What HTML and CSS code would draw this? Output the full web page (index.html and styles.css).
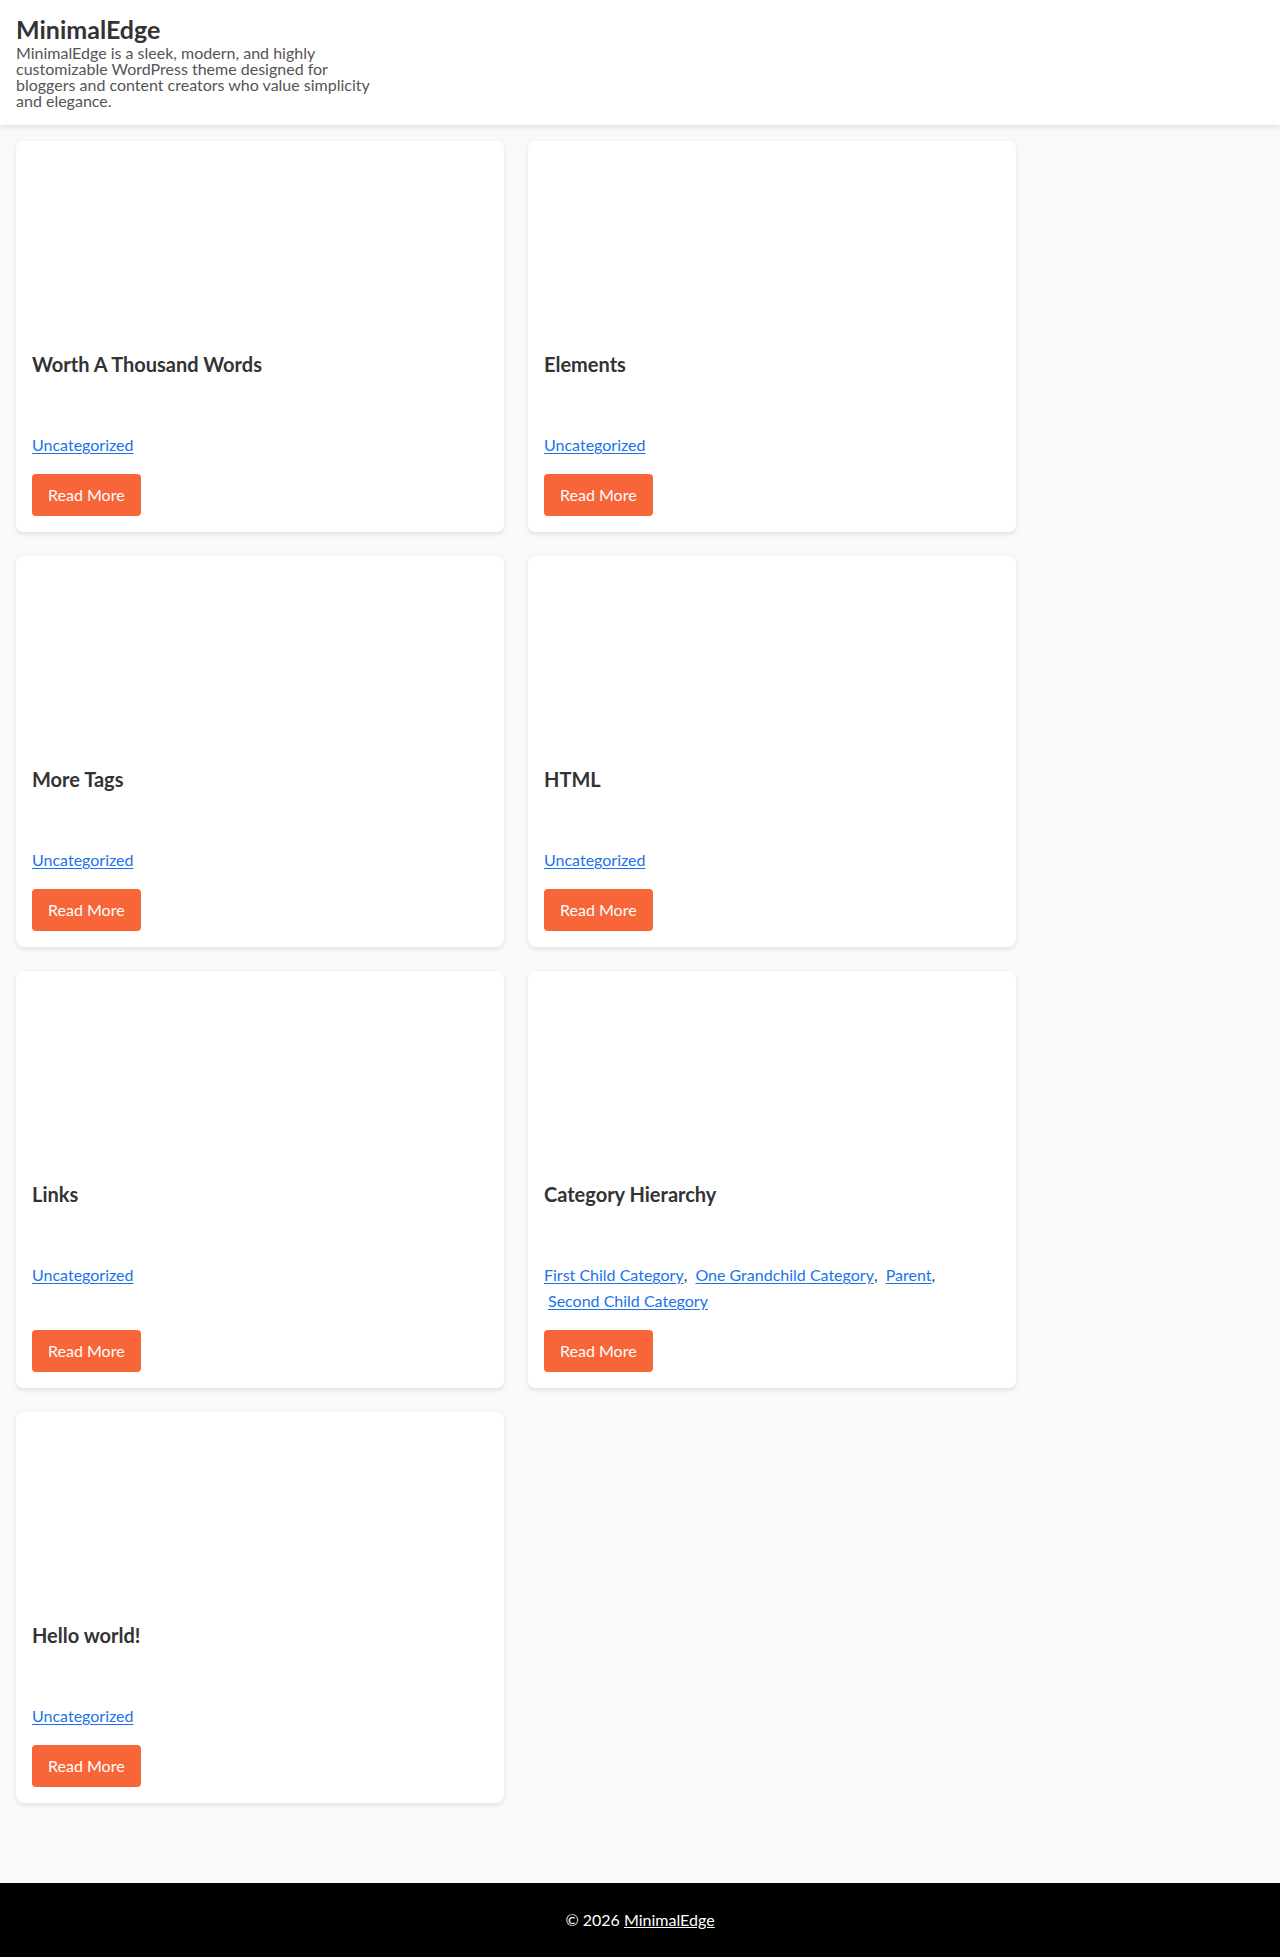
FILE: index.html
```html
<!DOCTYPE html>
<html lang="en">
<head>
    <meta charset="UTF-8">
    <meta name="viewport" content="width=device-width, initial-scale=1.0">
    <title>MinimalEdge</title>
    <link rel="stylesheet" href="styles.css">
</head>
<body>
    <header class="site-header">
        <div class="site-branding">
            <h1 class="site-title">MinimalEdge</h1>
            <p class="site-description">MinimalEdge is a sleek, modern, and highly customizable WordPress theme designed for bloggers and content creators who value simplicity and elegance.</p>
        </div>
    </header>

    <main class="site-main">
        <div class="posts-grid">
            <article class="post-card">
                <div class="post-thumb"></div>
                <h2 class="post-title">Worth A Thousand Words</h2>
                <div class="post-cats"><a href="#">Uncategorized</a></div>
                <a href="#" class="read-more">Read More</a>
            </article>
            <article class="post-card">
                <div class="post-thumb"></div>
                <h2 class="post-title">Elements</h2>
                <div class="post-cats"><a href="#">Uncategorized</a></div>
                <a href="#" class="read-more">Read More</a>
            </article>
            <article class="post-card">
                <div class="post-thumb"></div>
                <h2 class="post-title">More Tags</h2>
                <div class="post-cats"><a href="#">Uncategorized</a></div>
                <a href="#" class="read-more">Read More</a>
            </article>
            <article class="post-card">
                <div class="post-thumb"></div>
                <h2 class="post-title">HTML</h2>
                <div class="post-cats"><a href="#">Uncategorized</a></div>
                <a href="#" class="read-more">Read More</a>
            </article>
            <article class="post-card">
                <div class="post-thumb"></div>
                <h2 class="post-title">Links</h2>
                <div class="post-cats"><a href="#">Uncategorized</a></div>
                <a href="#" class="read-more">Read More</a>
            </article>
            <article class="post-card">
                <div class="post-thumb"></div>
                <h2 class="post-title">Category Hierarchy</h2>
                <div class="post-cats"><a href="#">First Child Category</a>, <a href="#">One Grandchild Category</a>, <a href="#">Parent</a>, <a href="#">Second Child Category</a></div>
                <a href="#" class="read-more">Read More</a>
            </article>
            <article class="post-card">
                <div class="post-thumb"></div>
                <h2 class="post-title">Hello world!</h2>
                <div class="post-cats"><a href="#">Uncategorized</a></div>
                <a href="#" class="read-more">Read More</a>
            </article>
        </div>
    </main>

    <footer class="site-footer">
        <p>&copy; 2026 <a href="#">MinimalEdge</a></p>
    </footer>
</body>
</html>
```

FILE: styles.css
```css
:root {
    --bg-page: #f9f9f9;
    --bg-card: #ffffff;
    --text-dark: #333333;
    --text-muted: #555555;
    --link: #1a73e8;
    --accent: #f76538;
    --shadow: 0 2px 5px rgba(0, 0, 0, 0.1);
}

* {
    box-sizing: border-box;
}

body {
    margin: 0;
    background: var(--bg-page);
    color: var(--text-dark);
    font-family: Lato, "Open Sans", sans-serif;
    font-size: 16px;
}

.site-header {
    background: #ffffff;
    padding: 14px 16px 16px;
    box-shadow: var(--shadow);
}

.site-title {
    margin: 0;
    font-size: 25px;
    line-height: 31px;
    font-weight: 700;
    color: var(--text-dark);
}

.site-description {
    margin: 0;
    max-width: 354px;
    font-size: 16px;
    line-height: 16px;
    color: var(--text-muted);
}

.site-main {
    padding: 16px 16px 80px;
}

.posts-grid {
    display: grid;
    grid-template-columns: 1fr 1fr;
    gap: 24px;
    max-width: 1000px;
}

.post-card {
    display: flex;
    flex-direction: column;
    background: var(--bg-card);
    border-radius: 8px;
    box-shadow: var(--shadow);
    padding: 16px;
}

.post-thumb {
    height: 194px;
}

.post-title {
    margin: 0 0 55px;
    font-size: 20px;
    line-height: 26px;
    font-weight: 700;
    color: var(--text-dark);
}

.post-cats {
    line-height: 26px;
    margin-bottom: 16px;
    color: var(--text-dark);
}

.post-cats a {
    display: inline-block;
    color: var(--link);
    text-underline-offset: 2px;
}

.post-cats a:not(:first-child) {
    margin-left: 4px;
}

.read-more {
    align-self: flex-start;
    margin-top: auto;
    background: var(--accent);
    color: #ffffff;
    text-decoration: none;
    line-height: 26px;
    padding: 8px 16px;
    border-radius: 4px;
}

.site-footer {
    background: #000000;
    color: #ffffff;
    text-align: center;
    padding: 24px 16px;
}

.site-footer p {
    margin: 0;
    line-height: 26px;
}

.site-footer a {
    color: #ffffff;
}
```
